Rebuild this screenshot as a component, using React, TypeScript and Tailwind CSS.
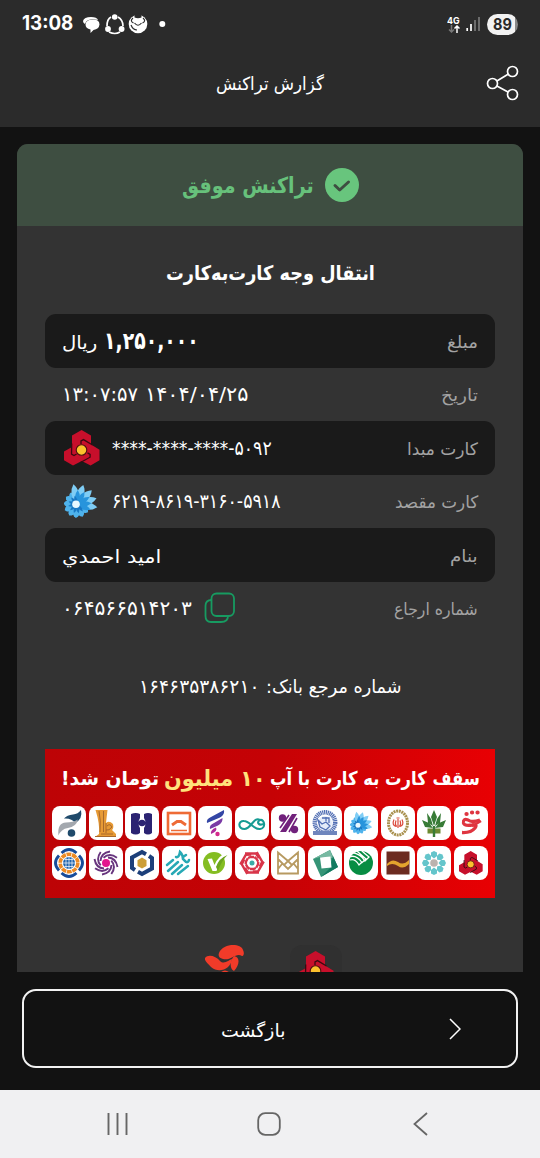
import React, { useLayoutEffect, useRef, useState } from "react";

type FitProps = { w: number; rtl?: boolean; children: React.ReactNode; className?: string };

/** One line of text drawn at a fixed advance width. */
function Fit({ w, rtl, children, className = "" }: FitProps) {
  const ref = useRef<HTMLSpanElement>(null);
  const [scale, setScale] = useState(1);
  useLayoutEffect(() => {
    if (ref.current) setScale(w / ref.current.offsetWidth);
  }, [w]);
  return (
    <div className="flex shrink-0" dir="ltr" style={{ width: w }}>
      <span
        ref={ref}
        dir={rtl ? "rtl" : "ltr"}
        className={"inline-block shrink-0 origin-left whitespace-nowrap " + className}
        style={{ transform: `scaleX(${scale})` }}
      >
        {children}
      </span>
    </div>
  );
}

function Mellat({ className = "" }: { className?: string }) {
  return (
    <svg viewBox="0 0 36 36" className={className}>
      <path
        d="M17.6 0 27 5.5V14.5L35.5 19.8V30.2L26.6 35.5 17.8 31 9 35.5 0 30.3V21.5L8 17V5.5Z"
        fill="#c70f2b"
      />
      {[0, 120, 240].map((a) => (
        <path
          key={a}
          d="M28.5 15 19.5 9.6 17 11V14"
          transform={`rotate(${a} 17.7 20.3)`}
          fill="none"
          stroke="#3a0a10"
          strokeWidth="1.3"
        />
      ))}
      <circle cx="17.5" cy="20" r="5.3" fill="#fbc02d" stroke="#4b1010" strokeWidth="1.1" />
    </svg>
  );
}

const longPetals = [-10, 18, 46, 72, 98];
const shortPetals = [125, 155, 185, 215, 245, 275, 305, 330];

function Saman({ className = "" }: { className?: string }) {
  return (
    <svg viewBox="0 0 36 36" className={className}>
      <circle cx="13" cy="21.5" r="9" fill="#2391d8" />
      {shortPetals.map((a) => (
        <path key={a} d="M13 21.5Q7.5 14 11 9.5L13 8 15 9.5Q18.500 14 13 21.500" transform={`rotate(${a} 13 21.5)`} fill="#4fb3ec" />
      ))}
      {longPetals.map((a) => (
        <path key={a} d="M13 21.500Q5.500 10 13 1Q20.500 10 13 21.500" transform={`rotate(${a} 13 21.5)`} fill="#7fcdf5" />
      ))}
      {longPetals.map((a) => (
        <path key={a} d="M13 21.500Q8 14 13 7Q18 14 13 21.500" transform={`rotate(${a + 13} 13 21.5)`} fill="#2794dc" />
      ))}
      {shortPetals.map((a) => (
        <path key={a} d="M13 21.500Q10 17 13 12.500Q16 17 13 21.500" transform={`rotate(${a + 15} 13 21.5)`} fill="#1878c4" />
      ))}
      <circle cx="12" cy="21.3" r="3.8" fill="#e7f8ff" />
    </svg>
  );
}

const ring6 = [0, 60, 120, 180, 240, 300];
const ring8 = [0, 45, 90, 135, 180, 225, 270, 315];

const bankRowOne: React.ReactNode[] = [
  <g>
    <path d="M12 12.500Q15 9 21 8.500Q26 8 29 4Q31 13 23 17Q20 12 12 12.500" fill="#1f4a6b" />
    <path d="M6.500 29.500Q5 17 14 16.500Q21 16.500 26 13.500Q24 21 16 22Q9 23 6.500 29.500" fill="#a3a8ae" />
    <circle cx="19.500" cy="27" r="3.800" fill="#1f4a6b" />
  </g>,
  <g>
    <path d="M6.500 4H18.500L17 17Q20 14 24 18Q25 22 23 24L27 28V31H6L10 28Q11 18 6.500 4" fill="#e79a35" />
    <path d="M10 5Q12 14 11 26M14.500 5V26M17 17V27M6 30.500H27M18 20Q21 17 23 21Q20 25 17 24M12 28H24" stroke="#a0622a" strokeWidth=".9" fill="none" />
  </g>,
  <g fill="#2b2372">
    <path d="M6 8Q11 6 15 8V12Q12 17 15 22V27Q11 30 6 27Z" />
    <path d="M19 8Q23 6 27 8V27Q23 30 19 27V22Q22 17 19 12Z" />
    <circle cx="17" cy="17" r="3.300" />
    <path d="M11 15.500H23V18.500H11Z" />
  </g>,
  <g fill="none" stroke="#ee6b36">
    <rect x="6" y="7" width="22" height="21" strokeWidth="2.600" />
    <path d="M10 19 15 15.500H19L24 19" strokeWidth="2.800" />
    <path d="M9 24.500H25" strokeWidth="1.600" />
  </g>,
  <g>
    <path d="M9 17Q8 13 13 11L26 4Q27 9 22 11.500Z" fill="#3446a5" />
    <path d="M12 23Q11 19 16 17L24.500 12Q25 17 20 19.500Z" fill="#7a3aa5" />
    <path d="M13 28Q12 24 18 21.500Q20 25 13 28" fill="#b02b9b" />
    <circle cx="19.500" cy="28" r="2.200" fill="#d42a8b" />
  </g>,
  <g fill="none" stroke="#169b93" strokeWidth="2.100">
    <path d="M25 14C19 10 16 23 9.500 23C2.500 23 3 14.500 9 15C15 15 18 23.500 25 23C31 22.500 30 13 25 14C21 16 24 20 28 18" />
  </g>,
  <g fill="#71217c">
    <circle cx="11.500" cy="12" r="3.700" />
    <circle cx="23.500" cy="23.500" r="3.700" />
    <path d="M21 8H26L15 26H9Z" />
    <path d="M18 9 9 22M26 12 18 26" stroke="#71217c" strokeWidth="1.600" />
  </g>,
  <g fill="none" stroke="#526fb4">
    <circle cx="17" cy="16.500" r="10.200" strokeWidth="4.500" strokeDasharray="1.200 .6" />
    <circle cx="17" cy="17" r="7" stroke="none" fill="#e4ebf8" />
    <path d="M10 14 14 18 18 16 22 20 18 24 12 21ZM14 12H21V17M18 11V15" strokeWidth="1.300" />
    <path d="M5 25H29V29H5Z" fill="#6f86bd" stroke="none" />
  </g>,
  <svg x="6" y="5" width="24" height="24">
    <Saman />
  </svg>,
  <g fill="none">
    <ellipse cx="17" cy="17" rx="9.500" ry="12" stroke="#a9914f" strokeWidth="3" strokeDasharray="2 .7" />
    <path d="M13 13.500Q10.500 19 15 20.500M21 13.500Q23.500 19 19 20.500M17 13V22M15 14.500Q13.500 19 16 20.500M19 14.500Q20.500 19 18 20.500M15.500 12H18.500" stroke="#db4a3c" strokeWidth="1.200" />
  </g>,
  <g fill="#377b36">
    <path d="M17 4 20 11 17 20 14 11Z" />
    <path d="M10 7 14 13 16 20 11 17ZM24 7 20 13 18 20 23 17Z" />
    <path d="M5 14 12 17 16 22 8 21ZM29 14 22 17 18 22 26 21Z" />
    <path d="M10.500 22.500H23.500V27.500H10.500Z" fill="#6b8a31" />
    <path d="M15.800 20H18.200V31H15.800Z" />
  </g>,
  <g fill="none" stroke="#df3540">
    <path d="M26 14Q18 17 14 14Q9 12 9.500 17Q10 20 18 19Q24 18 21 22Q17 27 8 26.500" strokeWidth="3.300" />
    <path d="M27 15Q22 18 18 20" strokeWidth="2.600" />
    <path d="M12.500 8H12.600M18 6.500H18.100M23.500 6.500H23.600" strokeWidth="4.200" strokeLinecap="round" />
  </g>,
];

const bankRowTwo: React.ReactNode[] = [
  <g fill="none">
    <path d="M9.500 7Q17 0 24.500 7M9.500 27Q17 34 24.500 27M7 9.500Q0 17 7 24.500M27 9.500Q34 17 27 24.500" stroke="#174c9a" strokeWidth="2.800" />
    <circle cx="17" cy="17" r="8.800" stroke="#ec8b24" strokeWidth="3.600" strokeDasharray="4.800 .73" />
    <circle cx="17" cy="17" r="6" fill="#1d63ad" />
    <path d="M11 17H23M17 11V23M12.500 13.500H21.500M12.500 20.500H21.500M14 12V22M20 12V22" stroke="#fff" strokeWidth=".7" />
  </g>,
  <g fill="none" stroke="#68357e" strokeWidth="1.900">
    {ring8.map((a) => (
      <path key={a} d="M11.500 15Q12 7 21 5.500" transform={`rotate(${a} 17 17)`} />
    ))}
    <circle cx="17" cy="17" r="4" fill="#e3168e" stroke="none" />
  </g>,
  <g fill="none">
    <path d="M10 24 7 22V11.500L17 6 21 8.200M24 10 27 12V22.500L17 28 13 25.800" stroke="#1c3f7a" strokeWidth="4" />
    <path d="M17 11.500 21.500 14.200V20L17 22.500 12.500 20V14.200Z" fill="#cd9f37" />
  </g>,
  <g fill="none" stroke="#27a9b5" strokeWidth="2.500" strokeLinecap="round">
    <path d="M5 19 11 14M6 25 16 16M10 28 20 19M16 28 26 20" />
    <path d="M14 11Q17 12 18 6Q21 9 21 13L24 16Q26 17 27 14M21 11 24 9" />
  </g>,
  <g>
    <circle cx="16" cy="17" r="11" fill="#84bd22" />
    <path d="M9.500 13 14 12.500 16.500 19Q20 10 29 6Q22 15 18.500 25H14.500Z" fill="#fff" />
    <path d="M18 21Q21 12 29.500 9Q24 14 20 25Z" fill="#6da51d" />
  </g>,
  <g fill="none" stroke="#d83549" strokeWidth="2.400">
    {ring6.map((a) => (
      <path key={a} d="M10 7.500H21L24 12M13 12 15.500 11H19" transform={`rotate(${a} 17 17)`} />
    ))}
    <circle cx="17" cy="17" r="2.500" fill="#3aaaa4" stroke="none" />
  </g>,
  <g fill="none" stroke="#b79a61" strokeWidth="1.800">
    <path d="M7 6.500 17 15 27 6.500V27.500H7ZM7 13 17 23 27 13M17 15 21 19 17 23 13 19ZM7 23 11 18M27 23 23 18" />
  </g>,
  <g>
    <path d="M5 13 22 4 30 21 13 31Z" fill="#359476" />
    <path d="M5 13 22 4 25 12 12 11Z" fill="#77b9a2" />
    <path d="M30 21 25 10 22 22 13 31Z" fill="#137b60" />
    <path d="M12 11.500 22.500 10.500 23.500 21.500 13.500 22.500Z" fill="#fff" />
  </g>,
  <g>
    <circle cx="17" cy="17" r="12" fill="#078d43" />
    <path d="M5 11Q12 8 18 16.500L22 13Q15 7 12 4M8 6.500Q17 8 21 15L25 11Q20 7 17 4M6 14Q11 12 15 19L18 16" fill="none" stroke="#fff" strokeWidth="1.300" />
  </g>,
  <g>
    <rect x="5.500" y="5.500" width="23" height="23" fill="#6c2b20" />
    <path d="M6 18Q11 12 17 16Q22 20 28 14V18Q22 24 17 20Q11 16 6 20Z" fill="#e4a42d" />
  </g>,
  <g>
    {ring8.map((a) => (
      <path key={a} d="M14 6.500 17 5 20 6.500V10L17 12.500 14 10Z" transform={`rotate(${a} 17 17)`} fill="#64c5cb" />
    ))}
    <circle cx="17" cy="17" r="3.800" fill="#bbb2ae" />
  </g>,
  <svg x="5" y="4.500" width="24" height="25">
    <Mellat />
  </svg>,
];

function BankRow({ items }: { items: React.ReactNode[] }) {
  return (
    <div className="flex justify-between" dir="ltr">
      {items.map((logo, i) => (
        <div key={i} className="size-[34px] overflow-hidden rounded-[8px] bg-white">
          <svg viewBox="0 0 34 34" className="size-full">
            {logo}
          </svg>
        </div>
      ))}
    </div>
  );
}

function Row({ label, labelW, dark, children }: { label: string; labelW: number; dark?: boolean; children: React.ReactNode }) {
  return (
    <div
      dir="ltr"
      className={"flex h-[53.5px] items-center justify-between rounded-[11px] px-[17px] " + (dark ? "bg-[#1a1a1a]" : "")}
    >
      <div className="flex items-center text-white">{children}</div>
      <Fit rtl w={labelW} className="pt-[3px] text-[17px] text-[#a3a3a3]">
        {label}
      </Fit>
    </div>
  );
}

function StatusBar() {
  return (
    <div className="flex h-12 items-center justify-between px-[22px] text-white">
      <div className="flex items-center">
        <Fit w={51} className="font-['Inter'] text-[19.5px] font-bold">13:08</Fit>
        <svg viewBox="0 0 84 24" className="ml-[10px] h-6 w-[84px]" fill="#fff">
          <path d="M0 9Q1 5 8 5Q14 5 15 8Q6 6 3 10L2 12Q0 11 0 9" />
          <path d="M2.500 12.500Q3 7.500 10 7.500Q16.500 7.500 16.500 12.500Q16 17 10.500 18L7.500 21V17.500Q2.500 16.500 2.500 12.500" />
          <g fill="none" stroke="#fff" strokeWidth="1.700">
            <path d="M28 5Q24 7 24 14M35 5Q40 8 40 14M26 20Q32 23 37 20" />
          </g>
          <circle cx="31.700" cy="5" r="2.800" />
          <circle cx="25" cy="17" r="2.900" />
          <circle cx="38.600" cy="17" r="2.900" />
          <circle cx="55" cy="12" r="9.300" />
          <path d="M51.500 1.500V5.500Q55 7 58.500 5.500V1.500Z" fill="#2b2b2b" />
          <path d="M50 6Q46.500 9 50.500 11M60 6Q63.500 9 59.500 11M51.500 11Q55 15.500 58.500 11M48 13Q50 18 54 18" stroke="#2b2b2b" fill="none" strokeWidth="1.200" />
          <circle cx="79.300" cy="12" r="3" />
        </svg>
      </div>
      <div className="flex items-center">
        <div className="flex flex-col items-center">
          <Fit w={13} className="font-['Inter'] text-[9.5px] leading-[9px] font-bold">4G</Fit>
          <svg viewBox="0 0 12 8" className="h-2 w-3" fill="none" strokeWidth="1.500">
            <path d="M3.500 0V7M1 4.500 3.500 7 6 4.500" stroke="#777" />
            <path d="M9 8V1M6.500 3.500 9 1 11.500 3.500" stroke="#fff" />
          </svg>
        </div>
        <svg viewBox="0 0 14 16" className="ml-[6px] h-4 w-[14px]" strokeWidth="1.700">
          <path d="M1.200 12V15M5 8V15" stroke="#fff" />
          <path d="M9 4V15M13 1V15" stroke="#777" />
        </svg>
        <div className="ml-[7px] flex h-[21px] w-[31px] items-center justify-center rounded-full bg-linear-to-r from-[#f2f2f2] from-90% to-[#888] to-90%">
          <Fit w={19} className="font-['Inter'] text-[16px] leading-[21px] font-bold text-[#292929]">89</Fit>
        </div>
      </div>
    </div>
  );
}

export default function App() {
  return (
    <div className="flex h-[1158px] w-[540px] flex-col overflow-hidden bg-[#121212] font-['DejaVu_Sans',sans-serif] text-white">
      <header className="h-[127px] shrink-0 bg-[#2b2b2b]">
        <StatusBar />
        <div className="flex h-[70px] items-center justify-end pr-[20px]">
          <Fit rtl w={108} className="text-[18px]">گزارش تراکنش</Fit>
          <svg viewBox="0 0 34 36" className="ml-[162px] h-9 w-[34px] shrink-0" fill="none" stroke="#fff" strokeWidth="1.700">
            <circle cx="6.500" cy="18.500" r="5" />
            <circle cx="26.500" cy="6.500" r="5" />
            <circle cx="26.500" cy="29.500" r="5" />
            <path d="M10.900 16 22 9.200M10.900 21 22 27" />
          </svg>
        </div>
      </header>

      <main className="mx-[17px] mt-[17px] flex h-[828px] shrink-0 flex-col overflow-hidden rounded-t-[11px] bg-[#333]">
        <div className="flex h-[82px] shrink-0 items-center justify-center gap-[11px] bg-[#3e4e41]">
          <Fit rtl w={132} className="text-[22px] font-bold text-[#67c17b]">تراکنش موفق</Fit>
          <svg viewBox="0 0 34 34" className="size-[34px]">
            <circle cx="17" cy="17" r="17" fill="#68c57d" />
            <path d="M10 17.500 14.700 22 23.500 14" fill="none" stroke="#3e4e41" strokeWidth="3" strokeLinecap="round" strokeLinejoin="round" />
          </svg>
        </div>
        <div className="flex h-[88px] shrink-0 items-center justify-center pt-[6px]">
          <Fit rtl w={209} className="text-[20px] font-bold">انتقال وجه کارت‌به‌کارت</Fit>
        </div>

        <div className="mx-7 flex flex-col">
          <Row label="مبلغ" labelW={31} dark>
            <Fit rtl w={35} className="pt-[4px] text-[18px]">ریال</Fit>
            <div className="ml-[7px]">
              <Fit w={95} className="text-[24px] font-bold">۱,۲۵۰,۰۰۰</Fit>
            </div>
          </Row>
          <Row label="تاریخ" labelW={37}>
            <Fit w={76} className="text-[20px]">۱۳:۰۷:۵۷</Fit>
            <div className="ml-[7px]">
              <Fit w={103} className="text-[20px]">۱۴۰۴/۰۴/۲۵</Fit>
            </div>
          </Row>
          <Row label="کارت مبدا" labelW={71} dark>
            <Mellat className="ml-[2px] size-9" />
            <div className="ml-[12px]">
              <Fit w={160} className="text-[20px]">****-****-****-۵۰۹۲</Fit>
            </div>
          </Row>
          <Row label="کارت مقصد" labelW={83}>
            <Saman className="ml-[2px] size-9" />
            <div className="ml-[12px]">
              <Fit w={169} className="text-[20px]">۶۲۱۹-۸۶۱۹-۳۱۶۰-۵۹۱۸</Fit>
            </div>
          </Row>
          <Row label="بنام" labelW={28} dark>
            <Fit rtl w={99} className="pt-[4px] text-[18px]">اميد احمدي</Fit>
          </Row>
          <Row label="شماره ارجاع" labelW={84}>
            <Fit w={130} className="text-[20px]">۰۶۴۵۶۶۵۱۴۲۰۳</Fit>
            <svg viewBox="0 0 32 32" className="ml-[12px] size-8" fill="none" stroke="#179b61" strokeWidth="1.800">
              <rect x="7.500" y="1.500" width="22.500" height="22.500" rx="5" />
              <path d="M7.500 8Q1.500 8 1.500 14V24Q1.500 30 7 30H17Q24 30 24 24" />
            </svg>
          </Row>
        </div>

        <div className="flex h-[114px] shrink-0 items-center justify-center pb-[12px]">
          <div dir="ltr" className="flex items-center gap-[7px]">
            <Fit w={120} className="text-[19px]">۱۶۴۶۳۵۳۸۶۲۱۰</Fit>
            <Fit rtl w={136} className="text-[18px]">شماره مرجع بانک:</Fit>
          </div>
        </div>

        <div className="mx-7 flex h-[149px] shrink-0 flex-col bg-linear-to-r from-[#bd0306] via-[#c50205] to-[#e80003] px-[7px]">
          <div className="flex h-[57px] items-center justify-center pt-[2px]" dir="rtl">
            <Fit rtl w={210} className="text-[19px] font-bold">سقف کارت به کارت با آپ</Fit>
            <div className="mr-[4px]"><Fit rtl w={102} className="text-[22px] font-bold text-[#ffe37c]">۱۰ میلیون</Fit></div>
            <div className="mr-[5px]"><Fit rtl w={98} className="text-[19px] font-bold">تومان شد!</Fit></div>
          </div>
          <div className="flex flex-col gap-[6px]">
            <BankRow items={bankRowOne} />
            <BankRow items={bankRowTwo} />
          </div>
        </div>

        <div className="flex h-[75px] shrink-0 items-start overflow-hidden pl-[188px]" dir="ltr">
          <svg viewBox="0 0 40 40" className="mt-[47px] size-10 shrink-0" fill="#f13b29">
            <path d="M14 8C18-2 36-2 38 5C40 9 38 11 37 11C31 7 26 16 18 14C14 13 13 11 14 8" />
            <path d="M0 13C3 9 11 11 15 16C19 20 24 15 27 14C26 24 14 29 6 22C2 18-1 15 0 13" />
            <path d="M29 11C36 12 34 21 29 26C25 24 24 17 29 11M15 28Q20 23 25 28V40H15Z" />
          </svg>
          <div className="mt-[47px] ml-[45px] flex h-[50px] w-[52px] shrink-0 items-start justify-center rounded-[12px] bg-[#303030] pt-[6px]">
            <Mellat className="size-9" />
          </div>
        </div>
      </main>

      <div className="h-[118px] shrink-0 px-[22px] pt-[17px]">
        <div className="flex h-[79px] items-center rounded-[14px] border-2 border-white/95 pl-[197px]" dir="ltr">
          <Fit rtl w={65} className="pt-[3px] text-[18px]">بازگشت</Fit>
          <svg viewBox="0 0 12 22" className="ml-[163px] h-[22px] w-3" fill="none" stroke="#fff" strokeWidth="1.500">
            <path d="M1 1 11 11 1 21" />
          </svg>
        </div>
      </div>

      <nav className="flex h-[68px] shrink-0 items-center bg-[#f0f0f2] pl-[107px]">
        <svg viewBox="0 0 22 22" className="size-[22px]" stroke="#666" strokeWidth="1.900">
          <path d="M1.500 0V22M10.500 0V22M19.500 0V22" />
        </svg>
        <svg viewBox="0 0 24 24" className="ml-[128px] size-6" fill="none" stroke="#666" strokeWidth="1.800">
          <rect x="1.200" y="1.200" width="21.600" height="21.600" rx="7" />
        </svg>
        <svg viewBox="0 0 15 24" className="ml-[132px] h-6 w-[15px]" fill="none" stroke="#666" strokeWidth="1.800">
          <path d="M14 1 1.500 12 14 23" />
        </svg>
      </nav>
    </div>
  );
}
